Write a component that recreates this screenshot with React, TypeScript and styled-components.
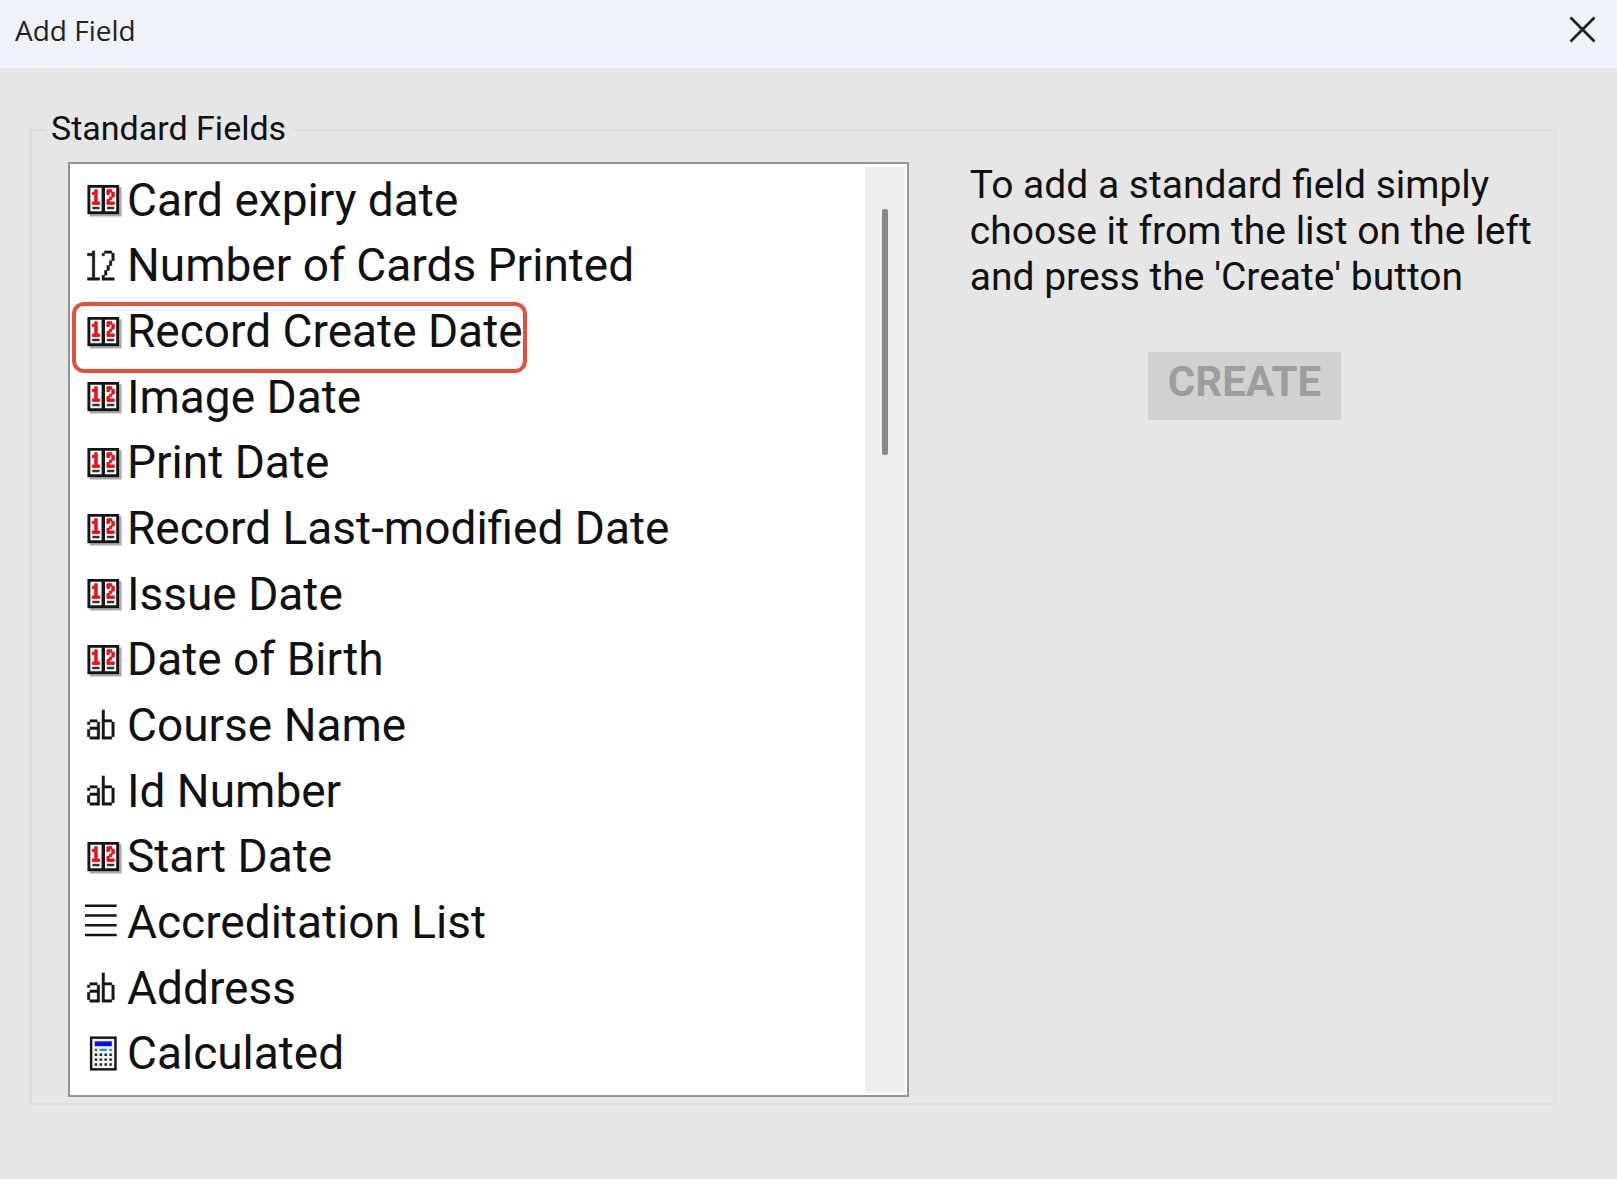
import React from "react";
import styled, { createGlobalStyle } from "styled-components";

const GlobalStyle = createGlobalStyle`
  *, *::before, *::after { box-sizing: border-box; }
  body { margin: 0; background: #e6e6e6; }
`;

const Dialog = styled.main`
  display: flex;
  flex-direction: column;
  min-height: 100vh;
  background: #e6e6e6;
  color: #111;
  font-family: Roboto, "Liberation Sans", sans-serif;
`;

const TitleBar = styled.header`
  display: flex;
  align-items: center;
  justify-content: space-between;
  height: 68px;
  padding: 0 21px 9px 15px;
  background: #f0f2f9;
`;

const Title = styled.h1`
  margin: 0;
  font: 400 28px/40px "Open Sans", "Noto Sans", sans-serif;
  color: #222;
`;

const CloseButton = styled.button`
  display: flex;
  padding: 0;
  border: 0;
  background: none;
  color: #222;
`;

const Body = styled.form`
  display: flex;
  flex: 1;
  padding: 42px 61px 74px 30px;
`;

const Group = styled.fieldset`
  display: grid;
  grid-template-columns: 59fr 41fr;
  column-gap: 61px;
  flex: 1;
  min-width: 0;
  margin: 0;
  padding: 12px 0 6px 36px;
  border: 2px solid #dedede;
`;

const Legend = styled.legend`
  margin-left: -23px;
  padding: 0 6px 4px;
  font-size: 34px;
  line-height: 36px;
`;

const ListBox = styled.div`
  display: flex;
  border: 2px solid #92959e;
  background: #fff;
`;

const Rows = styled.ul`
  display: grid;
  grid-auto-rows: 1fr;
  flex: 1;
  margin: 0;
  padding: 3px 0 9px 15px;
  list-style: none;
`;

const Row = styled.li`
  position: relative;
  display: flex;
  align-items: center;
  justify-self: start;
  gap: 3px;
  font-size: 46px;
  line-height: 56px;
  white-space: nowrap;
`;

const Highlight = styled.span`
  position: absolute;
  inset: 4px -4px -9px -13px;
  border: 4px solid #e5503e;
  border-radius: 12px;
`;

const Track = styled.div`
  width: 40px;
  margin: 3px 2px 2px 0;
  padding: 42px 17px;
  background: #efefef;
`;

const Thumb = styled.div`
  height: 246px;
  border-radius: 2px;
  background: #868786;
`;

const Side = styled.div`
  display: flex;
  flex-direction: column;
  align-items: flex-start;
`;

const Help = styled.p`
  margin: 0 0 52px;
  font-size: 39px;
  line-height: 46px;
`;

const CreateButton = styled.button`
  height: 68px;
  margin-left: 178px;
  padding: 0 20px 8px;
  border: 0;
  background: #d1d1d1;
  color: #9d9d9d;
  font: 700 42px/48px Roboto, "Liberation Sans", sans-serif;
`;

type Kind = "date" | "number" | "text" | "list" | "calc";

const drawings: Record<Kind, React.ReactNode> = {
  date: (
    <>
      <path fill="#aaa" d="M2 14h13v1H2zM14 3h1v11h-1z" />
      <path fill="#151515" d="M1 2h13v12H1z" />
      <path fill="#fff" d="M2.2 3.2h4.6v9.6H2.2zM8.2 3.2h4.6v9.6H8.2z" />
      <path
        fill="#f00f1c"
        stroke="#f00f1c"
        strokeWidth="0.4"
        d="M4 4h1v5h1v1H3V9h1V6H3V5h1zM9 4h2v1h1v2h-1v1h-1v1h2v1H9V8h1V7h1V5h-1v1H9z"
      />
      <path fill="#333" d="M3 11h3v1H3zM9 11h3v1H9z" />
    </>
  ),
  number: (
    <path
      fill="#151515"
      stroke="#151515"
      strokeWidth="0.2"
      d="M3 2h1v11h2v1H1v-1h2V4H1V3h2zM8 2h3v1H8zM7 3h1v1H7zM11 3h1v3h-1zM10 6h1v2h-1zM9 8h1v2H9zM8 10h1v2H8zM7 12h1v1h4v1H7z"
    />
  ),
  text: (
    <path
      fill="#151515"
      stroke="#151515"
      strokeWidth="0.2"
      d="M2 6h3v1H2zM1 7h1v1H1zM5 7h1v7H5zM2 9h3v1H2zM1 10h1v3H1zM2 13h3v1H2zM7 2h1v12H7zM8 6h3v1H8zM11 7h1v6h-1zM8 13h3v1H8z"
    />
  ),
  list: <path fill="#151515" d="M0 1h13v1H0zM0 5h13v1H0zM0 9h13v1H0zM0 13h13v1H0z" />,
  calc: (
    <>
      <path fill="#151515" d="M2 1h11v14H2z" />
      <path fill="#f1f1f1" d="M3 2h9v12H3z" />
      <path fill="#0a0af5" d="M4 3h7v2H4z" />
      <path fill="#5a4bc0" d="M4 6h1v1H4z" />
      <path fill="#20a0a0" d="M6 6h3v1H6zM10 6h1v1h-1z" />
      <path
        fill="#222"
        d="M4 8h1v1H4zM6 8h1v1H6zM8 8h1v1H8zM10 8h1v1h-1zM4 10h1v1H4zM6 10h1v1H6zM8 10h1v1H8zM10 10h1v1h-1zM4 12h1v1H4zM6 12h1v1H6zM8 12h1v1H8zM10 12h1v1h-1z"
      />
    </>
  ),
};

const KindIcon = ({ kind }: { kind: Kind }) => (
  <svg width="39" height="39" viewBox="0 0 16 16" aria-hidden="true">
    {drawings[kind]}
  </svg>
);

const fields: { kind: Kind; name: string; marked?: boolean }[] = [
  { kind: "date", name: "Card expiry date" },
  { kind: "number", name: "Number of Cards Printed" },
  { kind: "date", name: "Record Create Date", marked: true },
  { kind: "date", name: "Image Date" },
  { kind: "date", name: "Print Date" },
  { kind: "date", name: "Record Last-modified Date" },
  { kind: "date", name: "Issue Date" },
  { kind: "date", name: "Date of Birth" },
  { kind: "text", name: "Course Name" },
  { kind: "text", name: "Id Number" },
  { kind: "date", name: "Start Date" },
  { kind: "list", name: "Accreditation List" },
  { kind: "text", name: "Address" },
  { kind: "calc", name: "Calculated" },
];

export default function App() {
  return (
    <Dialog>
      <GlobalStyle />
      <TitleBar>
        <Title>Add Field</Title>
        <CloseButton type="button" aria-label="Close">
          <svg width="27" height="27" viewBox="0 0 27 27" fill="none" stroke="currentColor" strokeWidth="2.8">
            <path d="M1.5 1.5l24 24M25.5 1.5l-24 24" />
          </svg>
        </CloseButton>
      </TitleBar>
      <Body>
        <Group>
          <Legend>Standard Fields</Legend>
          <ListBox>
            <Rows role="listbox" aria-label="Standard Fields">
              {fields.map((field) => (
                <Row key={field.name} role="option" aria-selected={false}>
                  <KindIcon kind={field.kind} />
                  {field.name}
                  {field.marked && <Highlight />}
                </Row>
              ))}
            </Rows>
            <Track>
              <Thumb />
            </Track>
          </ListBox>
          <Side>
            <Help>To add a standard field simply choose it from the list on the left and press the 'Create' button</Help>
            <CreateButton type="button" disabled>
              CREATE
            </CreateButton>
          </Side>
        </Group>
      </Body>
    </Dialog>
  );
}
